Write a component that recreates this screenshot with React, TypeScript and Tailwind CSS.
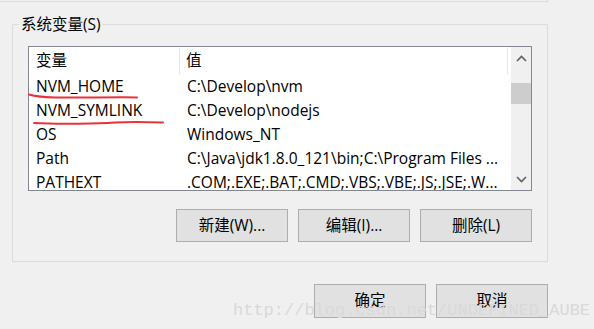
const rows = [
  { name: "NVM_HOME", value: "C:\\Develop\\nvm" },
  { name: "NVM_SYMLINK", value: "C:\\Develop\\nodejs" },
  { name: "OS", value: "Windows_NT" },
  { name: "Path", value: "C:\\Java\\jdk1.8.0_121\\bin;C:\\Program Files ..." },
  { name: "PATHEXT", value: ".COM;.EXE;.BAT;.CMD;.VBS;.VBE;.JS;.JSE;.W..." },
];

const ui = {
  fontFamily: '"Open Sans", "Noto Sans CJK SC", sans-serif',
};

function Chevron({ up }: { up?: boolean }) {
  return (
    <svg width="11" height="7" viewBox="0 0 11 7">
      <path
        d={up ? "M1 6 L5.5 1.5 L10 6" : "M1 1 L5.5 5.5 L10 1"}
        fill="none"
        stroke="#606060"
        strokeWidth="1.6"
      />
    </svg>
  );
}

function Btn({ label, h }: { label: string; h: string }) {
  return (
    <button
      className={`w-[112px] ${h} bg-[#e1e1e1] border border-[#adadad] text-[15.5px] text-black flex items-center justify-center`}
    >
      {label}
    </button>
  );
}

export default function App() {
  return (
    <div
      className="relative w-[594px] h-[329px] bg-[#f0f0f0] overflow-hidden text-black"
      style={ui}
    >
      {/* previous group box edge */}
      <div className="h-[2px] w-[548px] border-b border-r border-[#dcdcdc]" />

      <fieldset className="mt-[12px] ml-[12px] w-[536px] border border-[#dcdcdc] pl-[6px] pb-[19px]">
        <legend className="px-[2px] text-[15.5px] leading-[20px]">系统变量(S)</legend>
        <div className="ml-[9px] mt-[12px] w-[504px]">
          {/* list view */}
          <div className="h-[145px] border border-[#828790] bg-white flex">
            <div className="flex-1 overflow-hidden text-[15.5px]">
              <div className="flex h-[28px] items-center">
                <div className="w-[151px] h-[26px] pl-[7px] border-r border-[#e5e5e5] flex items-center">
                  变量
                </div>
                <div className="w-[328px] h-[26px] pl-[6px] border-r border-[#e5e5e5] flex items-center">
                  值
                </div>
              </div>
              {rows.map((r) => (
                <div key={r.name} className="flex h-[24px] items-center whitespace-nowrap">
                  <div className="w-[151px] pl-[7px] overflow-hidden">{r.name}</div>
                  <div className="w-[328px] pl-[7px] overflow-hidden">{r.value}</div>
                </div>
              ))}
            </div>
            {/* scrollbar */}
            <div className="w-[20px] ml-[2px] bg-[#f0f0f0] flex flex-col">
              <div className="h-[22px] flex items-center justify-center">
                <Chevron up />
              </div>
              <div className="flex-1 pt-[14px]">
                <div className="h-[21px] bg-[#cdcdcd]" />
              </div>
              <div className="h-[22px] flex items-center justify-center">
                <Chevron />
              </div>
            </div>
          </div>

          <div className="mt-[18px] flex justify-end gap-[10px]">
            <Btn label="新建(W)..." h="h-[33px]" />
            <Btn label="编辑(I)..." h="h-[33px]" />
            <Btn label="删除(L)" h="h-[33px]" />
          </div>
        </div>
      </fieldset>

      <div className="w-[548px] mt-[22px] flex justify-end gap-[10px]">
        <Btn label="确定" h="h-[34px]" />
        <Btn label="取消" h="h-[34px]" />
      </div>

      {/* red hand-drawn underlines */}
      <svg
        className="absolute left-0 top-0 pointer-events-none"
        width="594"
        height="329"
        viewBox="0 0 594 329"
      >
        <path
          d="M29 94.5 C34 96.5 40 97 55 97.5 S120 97 137 97.5"
          fill="none"
          stroke="#e8333b"
          strokeWidth="2"
          strokeLinecap="round"
        />
        <path
          d="M34 123 C60 124.5 100 123.5 115 122.5 S150 122 163 122.5"
          fill="none"
          stroke="#e8333b"
          strokeWidth="2"
          strokeLinecap="round"
        />
      </svg>

      {/* watermark */}
      <div className="absolute left-[233px] top-[301px] pointer-events-none whitespace-nowrap text-[17px] leading-[20px] text-[#d9d9d9] font-['Liberation_Mono',monospace]">
        http://blog.csdn.net/UNDEFINED_AUBE
      </div>
    </div>
  );
}
